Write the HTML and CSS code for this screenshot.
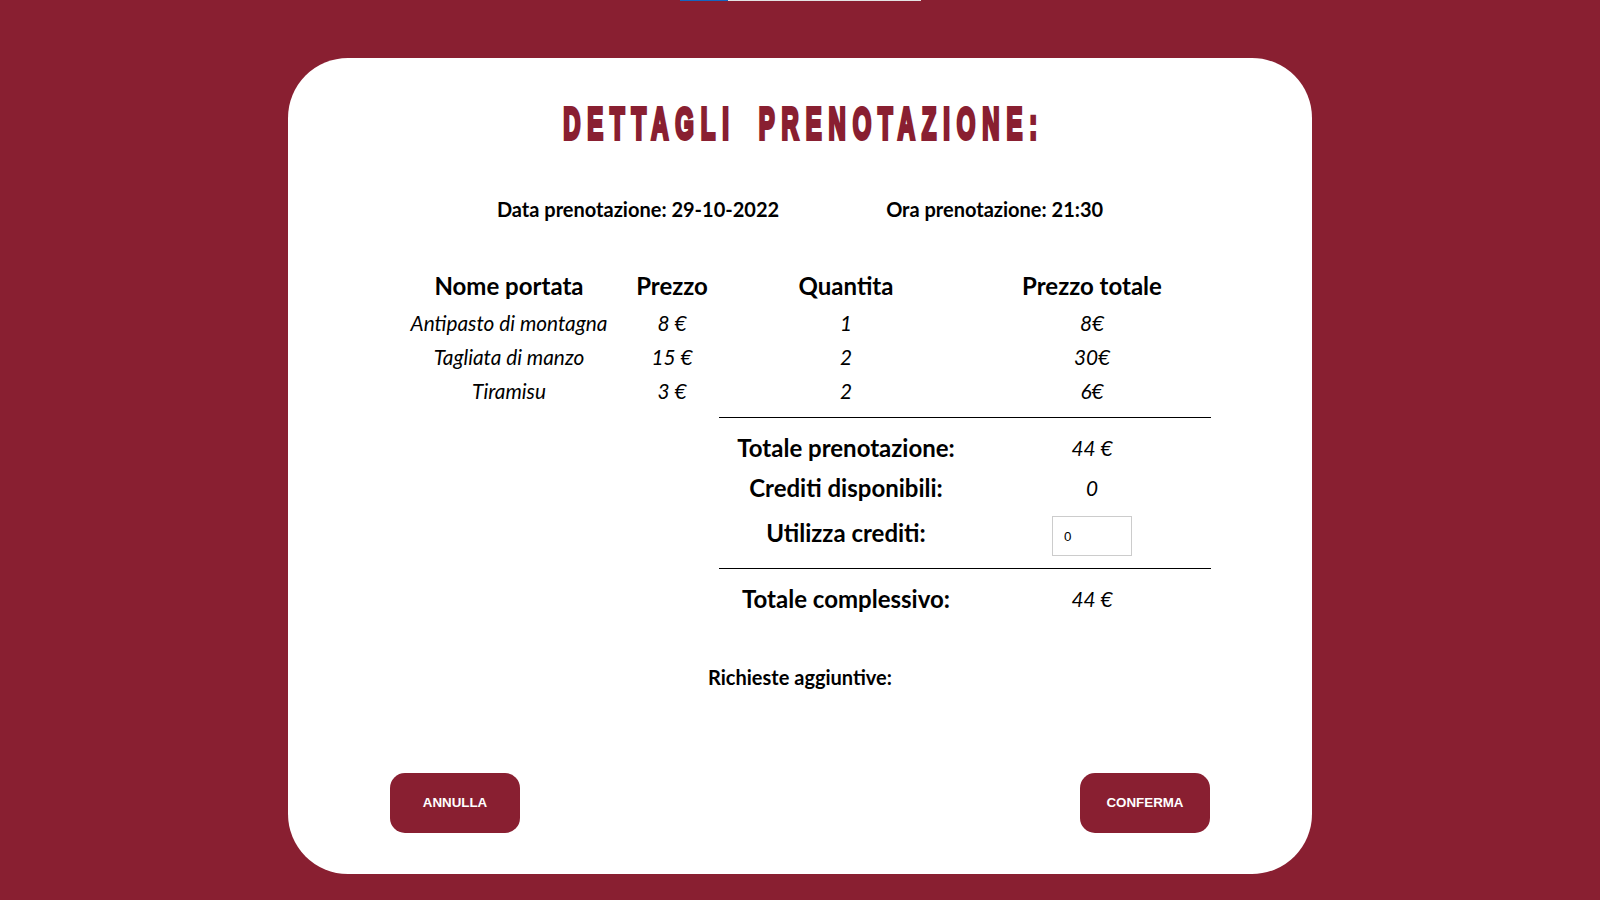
FILE: index.html
```html
<!DOCTYPE html>
<html lang="it">
<head>
<meta charset="utf-8">
<title>Dettagli prenotazione</title>
<link rel="stylesheet" href="styles.css">
</head>
<body>
<div class="loader"><div class="loader-fill"></div></div>
<main class="page">
  <section class="card">
    <h1 class="title"><span class="title-text">DETTAGLI PRENOTAZIONE:</span></h1>
    <div class="meta">
      <span>Data prenotazione: 29-10-2022</span>
      <span>Ora prenotazione: 21:30</span>
    </div>
    <table class="order">
      <colgroup><col class="c1"><col class="c2"><col class="c3"><col class="c4"></colgroup>
      <thead>
        <tr><th>Nome portata</th><th>Prezzo</th><th>Quantita</th><th>Prezzo totale</th></tr>
      </thead>
      <tbody>
        <tr class="item"><td>Antipasto di montagna</td><td>8 €</td><td>1</td><td>8€</td></tr>
        <tr class="item"><td>Tagliata di manzo</td><td>15 €</td><td>2</td><td>30€</td></tr>
        <tr class="item"><td>Tiramisu</td><td>3 €</td><td>2</td><td>6€</td></tr>
        <tr class="sep"><td colspan="2"></td><td colspan="2"><div class="rule"></div></td></tr>
        <tr class="sum sum-a"><td colspan="2"></td><th>Totale prenotazione:</th><td>44 €</td></tr>
        <tr class="sum sum-b"><td colspan="2"></td><th>Crediti disponibili:</th><td>0</td></tr>
        <tr class="sum sum-c"><td colspan="2"></td><th>Utilizza crediti:</th><td><input class="credit-input" type="number" value="0"></td></tr>
        <tr class="sep"><td colspan="2"></td><td colspan="2"><div class="rule"></div></td></tr>
        <tr class="sum sum-d"><td colspan="2"></td><th>Totale complessivo:</th><td>44 €</td></tr>
      </tbody>
    </table>
    <p class="notes">Richieste aggiuntive:</p>
    <div class="actions">
      <button class="btn" type="button">ANNULLA</button>
      <button class="btn" type="button">CONFERMA</button>
    </div>
  </section>
</main>
</body>
</html>
```
FILE: styles.css
```css
body {
  margin: 0;
  background: #891f31;
  font-family: Lato, "Open Sans", sans-serif;
  color: #000;
}

.loader {
  position: absolute;
  top: 0;
  left: 680px;
  width: 241px;
  height: 1px;
  background: #e4e4e4;
}

.loader-fill {
  width: 48px;
  height: 100%;
  background: #1565c0;
}

.page {
  padding-top: 58px;
}

.card {
  width: 1024px;
  box-sizing: border-box;
  margin: 0 auto;
  background: #fff;
  border-radius: 60px;
  padding: 40.6px 102px 41px;
}

.title {
  margin: 0;
  height: 50px;
  display: flex;
  justify-content: center;
  font: 700 45px/50px "Liberation Sans", Arial, sans-serif;
  color: #891f31;
}

.title-text {
  flex-shrink: 0;
  white-space: nowrap;
  letter-spacing: 13px;
  word-spacing: 18px;
  padding-left: 13px;
  transform: scaleX(0.53);
  -webkit-text-stroke: 4px #891f31;
}

.meta {
  margin-top: 48.4px;
  display: flex;
  justify-content: center;
  gap: 107px;
  font: 700 20px/24px Lato, sans-serif;
}

.order {
  margin: 45px -1px 0 auto;
  width: 818px;
  border-collapse: collapse;
  table-layout: fixed;
}

.c1 { width: 232px; }
.c2 { width: 94px; }
.c3 { width: 254px; }
.c4 { width: 238px; }

.order th,
.order td {
  padding: 0;
  text-align: center;
}

.order thead th {
  height: 40px;
  font: 700 24px/29px Lato, sans-serif;
}

.item td {
  height: 34px;
  font: italic 400 20.8px/24px Lato, sans-serif;
}

.sep td {
  padding: 9px 0 8px;
}

.rule {
  height: 1px;
  background: #000;
}

.sum th {
  font: 700 24px/29px Lato, sans-serif;
}

.sum td {
  font: italic 400 20.8px/24px Lato, sans-serif;
}

.sum-a td, .sum-a th { height: 44px; }
.sum-b td, .sum-b th { height: 36px; }
.sum-c td, .sum-c th { height: 53px; }
.sum-d td, .sum-d th { height: 44px; }

.credit-input {
  display: block;
  margin: 8px auto 0;
  width: 80px;
  height: 40px;
  box-sizing: border-box;
  border: 1px solid #cccccc;
  padding: 0 0 0 11px;
  font: 400 13.33px "Liberation Sans", Arial, sans-serif;
  font-style: normal;
  color: #000;
  background: #fff;
}

.notes {
  margin: 44px 0 0;
  text-align: center;
  font: 700 20px/24px Lato, sans-serif;
}

.actions {
  margin-top: 84px;
  display: flex;
  justify-content: space-between;
}

.btn {
  width: 130px;
  height: 60px;
  border: 0;
  border-radius: 15px;
  background: #891f31;
  color: #fff;
  font: 700 13.33px "Liberation Sans", Arial, sans-serif;
  padding: 0;
}
```
